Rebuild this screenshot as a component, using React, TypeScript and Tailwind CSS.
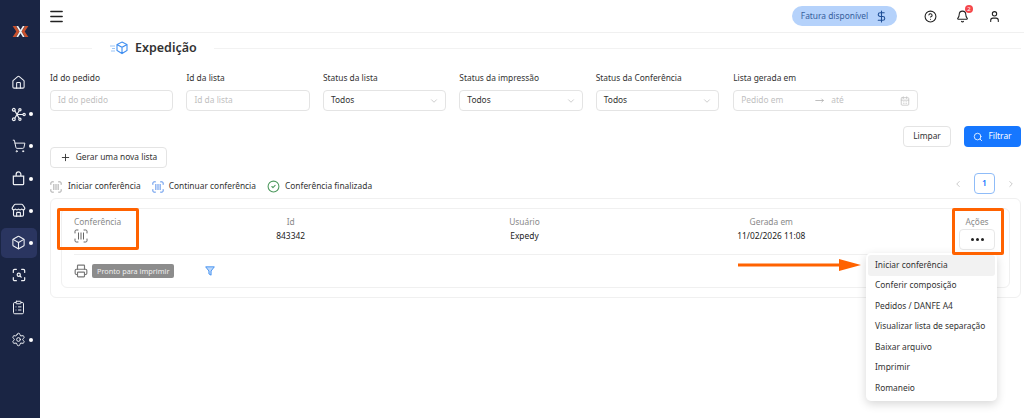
import { Bell, Box, CalendarDays, ChevronDown, ChevronLeft, ChevronRight, CircleCheck, CircleHelp, ClipboardList, DollarSign, Home, Menu, MoveRight, Plus, Printer, Search, Settings, ShoppingCart, Store, User } from "lucide-react";
import type { ReactNode } from "react";

function BarcodeScan({ className }: { className?: string }) {
    return (
        <svg viewBox="0 0 14 14" fill="none" stroke="currentColor" strokeWidth="1" className={className}>
            <path d="M1 4V2.200C1 1.500 1.500 1 2.200 1H4M10 1h1.800c.7 0 1.200.5 1.200 1.200V4M13 10v1.800c0 .7-.5 1.200-1.200 1.200H10M4 13H2.200C1.500 13 1 12.500 1 11.800V10" strokeLinecap="round" />
            <path d="M4.500 3.500v7M7 3.500v7M9.500 3.500v7" />
        </svg>
    );
}

function NodesIcon() {
    return (
        <svg viewBox="0 0 16 16" fill="none" stroke="currentColor" strokeWidth="1.300" className="h-[15px] w-[15px]">
            <circle cx="3" cy="3" r="1.500" />
            <circle cx="3" cy="13" r="1.500" />
            <circle cx="9.500" cy="3" r="1.200" />
            <circle cx="9.500" cy="13" r="1.200" />
            <circle cx="14" cy="8" r="1.200" />
            <path d="M4.200 4.200L8.500 11.800M4.200 11.800L8.500 4.200M6.300 8H12.800" />
        </svg>
    );
}

function BagIcon() {
    return (
        <svg viewBox="0 0 16 16" fill="none" stroke="currentColor" strokeWidth="1.300" className="h-[15px] w-[15px]">
            <path d="M2.500 5.500h11v8a1 1 0 0 1-1 1h-9a1 1 0 0 1-1-1zM5.500 5.500V3.500a2.500 2.500 0 0 1 5 0v2" />
        </svg>
    );
}

function ScanIcon() {
    return (
        <svg viewBox="0 0 16 16" fill="none" stroke="currentColor" strokeWidth="1.400" strokeLinecap="round" className="h-[14px] w-[14px]">
            <path d="M1.500 5V3a1.500 1.500 0 0 1 1.500-1.500h2M11 1.500h2A1.500 1.500 0 0 1 14.500 3v2M14.500 11v2a1.500 1.500 0 0 1-1.500 1.500h-2M5 14.500H3A1.500 1.500 0 0 1 1.500 13v-2" />
            <circle cx="7.700" cy="7.700" r="1.800" />
            <path d="M9.200 9.200l1.300 1.300" />
        </svg>
    );
}

const navItems: { icon: ReactNode; dot: boolean; active?: boolean }[] = [
    { icon: <Home size={15} strokeWidth={1.700} />, dot: false },
    { icon: <NodesIcon />, dot: true },
    { icon: <ShoppingCart size={14} strokeWidth={1.700} />, dot: true },
    { icon: <BagIcon />, dot: true },
    { icon: <Store size={15} strokeWidth={1.800} />, dot: true },
    { icon: <Box size={15} strokeWidth={1.700} />, dot: true, active: true },
    { icon: <ScanIcon />, dot: false },
    { icon: <ClipboardList size={15} strokeWidth={1.600} />, dot: false },
    { icon: <Settings size={15} strokeWidth={1.600} />, dot: true },
];

function Sidebar() {
    return (
        <aside className="flex w-[40px] shrink-0 flex-col items-center bg-[#1a2544] text-[#eef0f4]">
            <div className="mt-[24px] flex h-[14px] w-[18px] items-center justify-center">
                <svg viewBox="0 0 18 14" className="h-[13px] w-[17px]">
                    <path d="M0.500 1h3.500l4 6-4 6H0.500l4-6z" fill="#c8502c" />
                    <path d="M17.500 1H14l-4 6 4 6h3.500l-4-6z" fill="#c8502c" />
                    <path d="M4.500 1h2L9 5l2.500-4h2L10 7l3.500 6h-2L9 9l-2.500 4h-2L8 7z" fill="#f2f2f2" />
                </svg>
            </div>
            <nav className="mt-[29px] flex w-full flex-col gap-[2.200px] px-[1px]">
                {navItems.map((item, i) => (
                    <div key={i} className={`relative flex h-[30px] w-[36px] items-center justify-center rounded-[5px] pr-[1px] ${item.active ? "bg-[#2a3560]" : ""}`}>
                        {item.icon}
                        {item.dot && <span className="absolute left-[28px] top-[13px] h-[4px] w-[4px] rounded-full bg-white" />}
                    </div>
                ))}
            </nav>
        </aside>
    );
}

function Header() {
    return (
        <header className="flex h-[33px] items-center border-b border-[#f0f0f0] pl-[8px] pr-[23px]">
            <Menu size={17} strokeWidth={2} className="text-[#222]" />
            <div className="ml-auto flex h-[20px] w-[105px] items-center justify-center gap-[7px] rounded-full bg-[#b5d2fb] text-[8.400px] text-[#35609c]">
                <span>Fatura disponível</span>
                <DollarSign size={13} strokeWidth={2} className="text-[#1f4f96]" />
            </div>
            <CircleHelp size={13} className="ml-[27px] text-[#222]" />
            <div className="relative ml-[19px]">
                <Bell size={13} className="text-[#222]" />
                <span className="absolute -right-[4px] -top-[5px] flex h-[8px] w-[8px] items-center justify-center rounded-full bg-[#f5474c] text-[6px] leading-none text-white">2</span>
            </div>
            <User size={13} className="ml-[19px] text-[#222]" />
        </header>
    );
}

function Field({ label, width, children }: { label: string; width: string; children: ReactNode }) {
    return (
        <div className={`flex flex-col gap-[5px] ${width}`}>
            <span className="h-[14px] text-[8.400px] leading-[14px] text-[#333]">{label}</span>
            {children}
        </div>
    );
}

function TextInput({ placeholder }: { placeholder: string }) {
    return (
        <div className="flex h-[21px] items-center rounded-[4px] border border-[#e4e4e4] px-[7px] text-[8.400px] text-[#bfbfbf]">{placeholder}</div>
    );
}

function SelectInput() {
    return (
        <div className="flex h-[21px] items-center justify-between rounded-[4px] border border-[#e4e4e4] pl-[7px] pr-[6px] text-[8.400px] text-[#333]">
            <span>Todos</span>
            <ChevronDown size={10} className="text-[#c4c4c4]" />
        </div>
    );
}

function Filters() {
    return (
        <div className="flex gap-[13px]">
            <Field label="Id do pedido" width="w-[123.450px]"><TextInput placeholder="Id do pedido" /></Field>
            <Field label="Id da lista" width="w-[123.450px]"><TextInput placeholder="Id da lista" /></Field>
            <Field label="Status da lista" width="w-[123.450px]"><SelectInput /></Field>
            <Field label="Status da impressão" width="w-[123.450px]"><SelectInput /></Field>
            <Field label="Status da Conferência" width="w-[123.450px]"><SelectInput /></Field>
            <Field label="Lista gerada em" width="ml-[1px] w-[185px]">
                <div className="flex h-[21px] items-center rounded-[4px] border border-[#e4e4e4] px-[7px] text-[8.400px] text-[#bfbfbf]">
                    <span className="w-[74px]">Pedido em</span>
                    <MoveRight size={9} className="text-[#aaa]" />
                    <span className="ml-[7px]">até</span>
                    <CalendarDays size={10} className="ml-auto text-[#c4c4c4]" />
                </div>
            </Field>
        </div>
    );
}

function Legend() {
    return (
        <div className="flex items-center pt-[7px] text-[8.400px] text-[#333]">
            <BarcodeScan className="h-[12px] w-[12px] text-[#9a9a9a]" />
            <span className="ml-[6px]">Iniciar conferência</span>
            <BarcodeScan className="ml-[11px] h-[12px] w-[12px] text-[#3f7fe8]" />
            <span className="ml-[5px]">Continuar conferência</span>
            <CircleCheck size={13} className="ml-[11px] text-[#4f9a5f]" />
            <span className="ml-[5px]">Conferência finalizada</span>
        </div>
    );
}

function Column({ title, value, className }: { title: string; value: string; className: string }) {
    return (
        <div className={`flex flex-col items-center text-center ${className}`}>
            <span className="text-[8.400px] leading-[14px] text-[#8a8a8a]">{title}</span>
            <span className="text-[8.400px] leading-[14px] text-[#222]">{value}</span>
        </div>
    );
}

function ListCard() {
    return (
        <div className="mt-[4px] rounded-[6px] border border-[#f0f0f0] px-[10px] pb-[9px] pt-[9px]">
            <div className="rounded-[6px] border border-[#f0f0f0]">
                <div className="mx-[12px] flex h-[46px] items-start border-b border-[#f0f0f0] pt-[6px]">
                    <div className="flex w-[96px] flex-col">
                        <span className="text-[8.400px] leading-[14px] text-[#8a8a8a]">Conferência</span>
                        <BarcodeScan className="h-[14px] w-[14px] text-[#666]" />
                    </div>
                    <Column title="Id" value="843342" className="ml-[96px] w-[50px]" />
                    <Column title="Usuário" value="Expedy" className="ml-[184px] w-[50px]" />
                    <Column title="Gerada em" value="11/02/2026 11:08" className="ml-[172px] w-[100px]" />
                    <div className="ml-[136px] flex w-[40px] flex-col items-center">
                        <span className="text-[8.400px] leading-[14px] text-[#8a8a8a]">Ações</span>
                        <div className="flex h-[21px] w-[36px] items-center justify-center rounded-[4px] border border-[#e8e8e8] text-[#222]">
                            <span className="flex gap-[2px]">
                                <i className="h-[3px] w-[3px] rounded-full bg-[#222]" />
                                <i className="h-[3px] w-[3px] rounded-full bg-[#222]" />
                                <i className="h-[3px] w-[3px] rounded-full bg-[#222]" />
                            </span>
                        </div>
                    </div>
                </div>
                <div className="mx-[12px] flex h-[32px] items-center">
                    <Printer size={14} className="text-[#777]" />
                    <span className="ml-[4px] rounded-[2px] bg-[#8c8c8c] px-[5px] text-[7.300px] leading-[14px] text-[#f0f0f0]">Pronto para imprimir</span>
                    <svg viewBox="0 0 12 12" className="ml-[31px] h-[10px] w-[10px]">
                        <path d="M0.800 1h10.400L7.300 6v5l-2.600-1.500V6z" fill="#bcd8fb" stroke="#3f8ef0" strokeWidth="1.100" />
                    </svg>
                </div>
            </div>
        </div>
    );
}

const menuItems = ["Iniciar conferência", "Conferir composição", "Pedidos / DANFE A4", "Visualizar lista de separação", "Baixar arquivo", "Imprimir", "Romaneio"];

function ActionMenu() {
    return (
        <div className="absolute left-[866px] top-[253px] flex w-[131px] flex-col rounded-[5px] bg-white p-[2px] shadow-[0_3px_10px_rgba(0,0,0,0.16)]">
            {menuItems.map((item, i) => (
                <div key={item} className={`flex h-[20.500px] items-center whitespace-nowrap rounded-[3px] px-[7px] text-[8.400px] text-[#333] ${i === 0 ? "bg-[#f2f2f2]" : ""}`}>{item}</div>
            ))}
        </div>
    );
}

export default function App() {
    return (
        <div className="relative flex h-[418px] w-[1024px] overflow-hidden bg-white font-['Noto_Sans','Open_Sans',sans-serif]">
            <Sidebar />
            <main className="min-w-0 flex-1">
                <Header />
                <div className="pl-[10px] pr-[3px]">
                    <div className="flex items-center pt-[5px]">
                        <div className="h-px w-[42px] bg-[#f2f2f2]" />
                        <svg viewBox="0 0 20 14" fill="none" stroke="#3f8ef0" strokeWidth="1.100" className="ml-[17px] h-[14px] w-[20px]">
                            <path d="M13 1l5 2.500v6L13 12.500 8 9.500v-6zM8 3.500l5 2.800 5-2.800M13 6.300v6.200" />
                            <path d="M1 5h5M3 7.500h3M2 10h4" stroke="#9cc6f8" />
                        </svg>
                        <h1 className="ml-[6px] text-[12.500px] font-semibold leading-[20px] text-[#333]">Expedição</h1>
                        <div className="ml-[17px] h-px flex-1 bg-[#f2f2f2]" />
                    </div>
                    <div className="mt-[13px]"><Filters /></div>
                    <div className="mt-[15px] flex justify-end gap-[13px]">
                        <button className="flex h-[21px] w-[48px] items-center justify-center rounded-[4px] border border-[#e4e4e4] text-[8.400px] text-[#333]">Limpar</button>
                        <button className="flex h-[21px] w-[57px] items-center justify-center gap-[5px] rounded-[4px] bg-[#1677ff] text-[8.400px] text-white"><Search size={10} />Filtrar</button>
                    </div>
                    <button className="flex h-[21px] w-[117px] items-center justify-center gap-[5px] rounded-[4px] border border-[#e4e4e4] text-[8.400px] text-[#333]"><Plus size={11} />Gerar uma nova lista</button>
                    <div className="mt-[5px] flex items-start justify-between">
                        <Legend />
                        <div className="flex items-center text-[#c0c0c0]">
                            <ChevronLeft size={10} />
                            <span className="ml-[11px] flex h-[21px] w-[21px] items-center justify-center rounded-[4px] border border-[#8fbcf8] text-[8.400px] font-semibold text-[#1677ff]">1</span>
                            <ChevronRight size={10} className="ml-[11px] mr-[5px]" />
                        </div>
                    </div>
                    <ListCard />
                </div>
            </main>
            <ActionMenu />
            {/* Marcações laranja por cima da tela */}
            <div className="absolute left-[57px] top-[208px] h-[42px] w-[82px] rounded-[2px] border-[3px] border-[#ff6200]" />
            <div className="absolute left-[952px] top-[208px] h-[47px] w-[52px] rounded-[2px] border-[3px] border-[#ff6200]" />
            <svg viewBox="0 0 126 14" className="absolute left-[737px] top-[258px] h-[14px] w-[126px]">
                <path d="M1 5.500h101V1l22 6-22 6V8.500H1z" fill="#ff6200" />
            </svg>
        </div>
    );
}
